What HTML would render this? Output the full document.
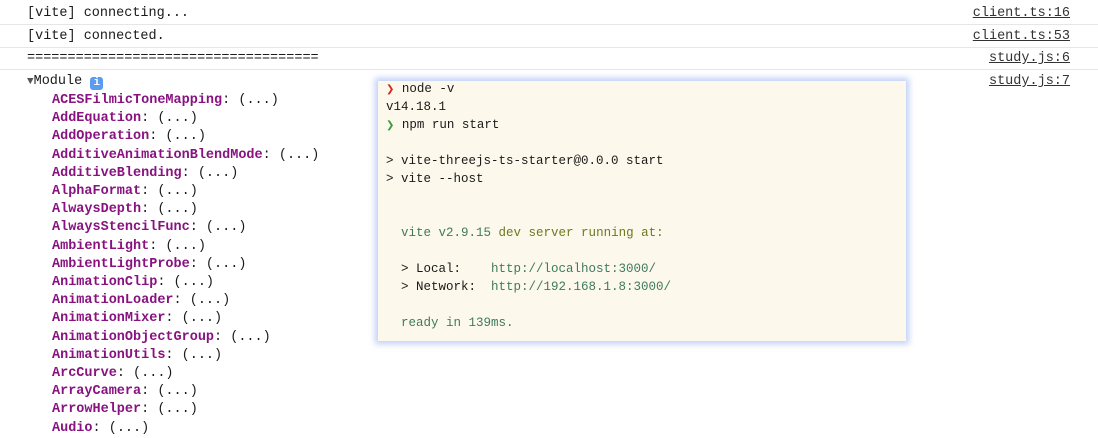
<!DOCTYPE html>
<html><head><meta charset="utf-8"><style>
body{margin:0;width:1098px;height:434px;background:#fff;overflow:hidden;position:relative;font-family:"Liberation Mono",monospace;font-size:13.5px;color:#1a1a1a}
.row{position:absolute;left:0;width:1098px;height:22px;line-height:24px;border-bottom:1px solid #e6e6e6}
.row .t{position:absolute;left:27px}
.row .l{position:absolute;right:28px;text-decoration:underline;color:#333}
.k{position:absolute;left:52px;line-height:18px;white-space:pre}
.k b{color:#881280;font-weight:600}
.term{position:absolute;left:378px;top:81px;width:528px;height:260px;background:#fcf8ec;box-shadow:0 0 6px 3px rgba(120,150,240,0.45);font-size:12.5px;color:#1a1a1a}
.term div{position:absolute;left:8px;white-space:pre;line-height:18px}
.g{color:#3f7a5e}.o{color:#6b7a1e}
</style></head><body>
<div class="row" style="top:2px"><span class="t">[vite] connecting...</span><span class="l">client.ts:16</span></div>
<div class="row" style="top:25px"><span class="t">[vite] connected.</span><span class="l">client.ts:53</span></div>
<div class="row" style="top:47px"><span class="t">====================================</span><span class="l">study.js:6</span></div>
<div class="row" style="top:70px;border:none"><span class="t" style="left:27px"><span style="font-size:11px;color:#555">▼</span>Module <span style="display:inline-block;width:13px;height:13px;background:#5b9cf0;color:#fff;border-radius:3px;font-size:11px;line-height:13px;text-align:center;font-weight:bold;vertical-align:-1px">i</span></span><span class="l">study.js:7</span></div>
<div class="k" style="top:92px"><b>ACESFilmicToneMapping</b>: (...)</div>
<div class="k" style="top:110.2px"><b>AddEquation</b>: (...)</div>
<div class="k" style="top:128.4px"><b>AddOperation</b>: (...)</div>
<div class="k" style="top:146.6px"><b>AdditiveAnimationBlendMode</b>: (...)</div>
<div class="k" style="top:164.8px"><b>AdditiveBlending</b>: (...)</div>
<div class="k" style="top:183px"><b>AlphaFormat</b>: (...)</div>
<div class="k" style="top:201.2px"><b>AlwaysDepth</b>: (...)</div>
<div class="k" style="top:219.4px"><b>AlwaysStencilFunc</b>: (...)</div>
<div class="k" style="top:237.6px"><b>AmbientLight</b>: (...)</div>
<div class="k" style="top:255.8px"><b>AmbientLightProbe</b>: (...)</div>
<div class="k" style="top:274px"><b>AnimationClip</b>: (...)</div>
<div class="k" style="top:292.2px"><b>AnimationLoader</b>: (...)</div>
<div class="k" style="top:310.4px"><b>AnimationMixer</b>: (...)</div>
<div class="k" style="top:328.6px"><b>AnimationObjectGroup</b>: (...)</div>
<div class="k" style="top:346.8px"><b>AnimationUtils</b>: (...)</div>
<div class="k" style="top:365px"><b>ArcCurve</b>: (...)</div>
<div class="k" style="top:383.2px"><b>ArrayCamera</b>: (...)</div>
<div class="k" style="top:401.4px"><b>ArrowHelper</b>: (...)</div>
<div class="k" style="top:419.6px"><b>Audio</b>: (...)</div>
<div class="term">
<div style="top:-1px"><span style="color:#d0281c;font-size:10px">❯</span> node -v</div>
<div style="top:17px">v14.18.1</div>
<div style="top:35px"><span style="color:#3a9a3a;font-size:10px">❯</span> npm run start</div>
<div style="top:71px">&gt; vite-threejs-ts-starter@0.0.0 start</div>
<div style="top:89px">&gt; vite --host</div>
<div style="top:143px">  <span class="g">vite v2.9.15</span> <span class="o">dev server running at:</span></div>
<div style="top:179px">  &gt; Local:    <span class="g">http://localhost:3000/</span></div>
<div style="top:197px">  &gt; Network:  <span class="g">http://192.168.1.8:3000/</span></div>
<div style="top:233px">  <span class="g">ready in 139ms.</span></div>
</div>
</body></html>
